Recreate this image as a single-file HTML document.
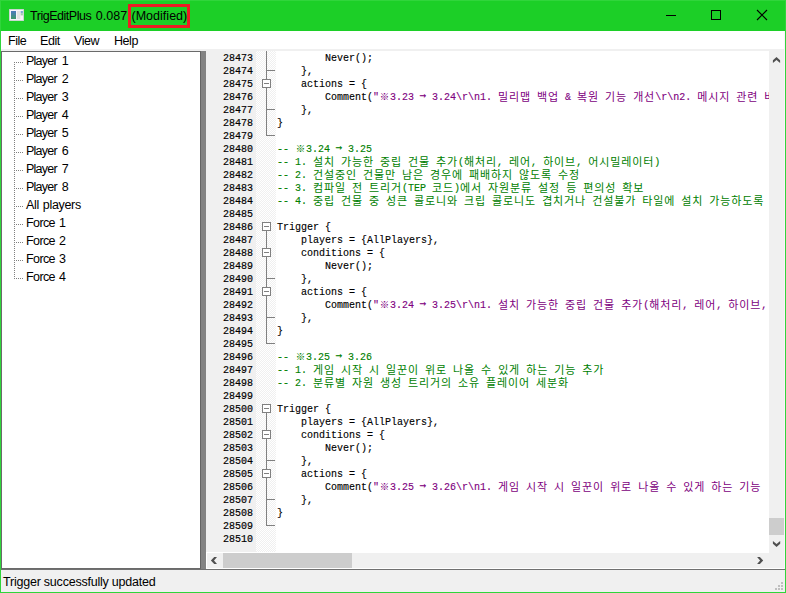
<!DOCTYPE html>
<html><head><meta charset="utf-8"><title>TrigEditPlus</title>
<style>
html,body{margin:0;padding:0;}
body{width:786px;height:593px;overflow:hidden;position:relative;background:#fff;font-family:"Liberation Sans","Noto Sans CJK KR",sans-serif;font-size:12px;color:#000;}
div,i,b,span{box-sizing:border-box;}
i,b{display:block;position:absolute;font-style:normal;font-weight:normal;}
#win{position:absolute;left:0;top:0;width:786px;height:593px;background:#30d53b;}
#title{position:absolute;left:0;top:0;width:786px;height:31px;background:#1ccf27;box-shadow:inset 1px 1px 0 #30d53b, inset -1px 0 0 #30d53b;}
#ttext{position:absolute;left:30px;top:7px;line-height:18px;font-size:12.5px;white-space:pre;letter-spacing:-0.25px;}
#ttext2{position:absolute;left:131.5px;top:7px;line-height:18px;font-size:12.5px;white-space:pre;letter-spacing:0.02px;}
#redbox{position:absolute;left:128px;top:4px;width:62px;height:24px;border:3px solid #ed1c24;}
#menu{position:absolute;left:1px;top:31px;width:784px;height:18px;background:#fff;}
#menu span{position:absolute;top:2px;line-height:16px;font-size:12.5px;letter-spacing:-0.45px;}
#menusep{position:absolute;left:1px;top:49px;width:784px;height:2px;background:#f0f0f0;}
#tree{position:absolute;left:1px;top:51px;width:200px;height:518px;background:#fff;border:1px solid #6a6a6a;border-right-color:#646464;}
#split{position:absolute;left:201px;top:51px;width:5px;height:518px;background:#838383;}
.ti{position:absolute;left:26px;height:18px;line-height:18px;font-size:12.5px;white-space:pre;}
.th{left:14px;width:9px;height:1px;background-image:linear-gradient(90deg,#808080 50%,transparent 0);background-size:2px 1px;}
.tv{left:14px;width:1px;background-image:linear-gradient(180deg,#808080 50%,transparent 0);background-size:1px 2px;}
#ed{position:absolute;left:206px;top:51px;width:579px;height:518px;background:#fff;overflow:hidden;}
#lnm{position:absolute;left:206px;top:49px;width:50px;height:503px;background:#f0f0f0;}
#fm{position:absolute;left:256px;top:51px;width:20px;height:501px;background-color:#fff;background-image:conic-gradient(#fff 25%,#f0f0f0 0 50%,#fff 0 75%,#f0f0f0 0);background-size:2px 2px;}
.ln,.cl{position:absolute;height:13px;line-height:13px;font-family:"Liberation Mono","Noto Sans CJK KR",monospace;font-size:10px;white-space:pre;}
.ln{left:206px;width:47px;text-align:right;padding-top:1px;-webkit-text-stroke:0.18px #000;}
.cl{left:277px;padding-top:1px;-webkit-text-stroke:0.13px currentColor;}
.k{-webkit-text-stroke:0;font-family:"Noto Sans CJK KR","NanumGothic",sans-serif;font-size:11px;letter-spacing:0.88px;display:inline-block;line-height:12px;vertical-align:top;position:relative;top:-1px;}
.a{font-family:"DejaVu Sans Mono",monospace;font-size:11px;display:inline-block;width:6px;text-indent:-0.3px;line-height:12px;vertical-align:top;position:relative;top:-1px;}
.r{font-family:"Noto Sans CJK KR",sans-serif;font-size:9.5px;display:inline-block;width:11px;text-align:center;line-height:12px;vertical-align:top;position:relative;top:-1.5px;}
.c{color:#008000;}
.s{color:#800080;}
.fv{left:266px;width:1px;background:#808080;}
.fh{left:266px;width:9px;height:1px;background:#808080;}
.fb{left:262px;width:9px;height:9px;border:1px solid #808080;background:#fff;}
.fb b{left:1px;top:3px;width:5px;height:1px;background:#808080;}
#clip{position:absolute;left:0;top:0;width:769px;height:553px;overflow:hidden;}
#rc{position:absolute;left:784px;top:31px;width:1px;height:561px;background:#fbf4fb;}
#vs{position:absolute;left:769px;top:49px;width:15px;height:504px;background:#f0f0f0;}
#vthumb{position:absolute;left:769px;top:518px;width:15px;height:17px;background:#cdcdcd;}
#hs{position:absolute;left:207px;top:553px;width:577px;height:15px;background:#f0f0f0;}
#hthumb{position:absolute;left:223px;top:553px;width:129px;height:15px;background:#cdcdcd;}
#sbline{position:absolute;left:1px;top:569px;width:784px;height:1px;background:#707070;}
#status{position:absolute;left:1px;top:570px;width:784px;height:22px;background:#f0f0f0;}
#status span{position:absolute;left:2px;top:3px;line-height:18px;font-size:12.5px;white-space:pre;letter-spacing:-0.22px;}
svg{position:absolute;overflow:visible;}
</style></head><body>
<div id="win"></div>
<div id="title">
 <svg style="left:9px;top:9px" width="15" height="12" viewBox="0 0 15 12">
  <rect x="0.25" y="0.25" width="14.5" height="11.5" fill="#f7f2fa" stroke="#d2c6dc" stroke-width="0.5"/>
  <rect x="2" y="2" width="5" height="2" fill="#4c7cb4"/><rect x="2" y="4" width="5" height="2" fill="#4884a2"/><rect x="2" y="6" width="5" height="2" fill="#448c8a"/><rect x="2" y="8" width="5" height="2" fill="#3f9472"/>
  <rect x="8" y="2" width="3.3" height="8" fill="#e2e2e2"/>
  <rect x="11.7" y="2" width="2.2" height="2.2" fill="#7ea9d2"/><rect x="11.7" y="4.2" width="2.2" height="2.2" fill="#a0ccae"/>
 </svg>
 <div id="ttext"><span style="letter-spacing:-0.47px">TrigEditPlus</span><span style="letter-spacing:0;position:absolute;left:62.4px"> 0.087</span></div><div id="ttext2">(Modified)</div>
 <div id="redbox"></div>
 <svg style="left:666px;top:10px" width="101" height="11" viewBox="0 0 101 11">
  <path d="M0 5.5H10" stroke="#000" stroke-width="1" fill="none"/>
  <rect x="45.5" y="0.5" width="9" height="9" stroke="#000" stroke-width="1" fill="none"/>
  <path d="M91 0L101 10M101 0L91 10" stroke="#000" stroke-width="1.1" fill="none"/>
 </svg>
</div>
<div id="menu"><span style="left:7px">File</span><span style="left:39px">Edit</span><span style="left:73px">View</span><span style="left:113px">Help</span></div>
<div id="menusep"></div>
<div id="tree"></div>
<div class="ti" style="top:52px;letter-spacing:-0.75px;word-spacing:2.1px">Player 1</div>
<i class="th" style="top:62px"></i>
<div class="ti" style="top:70px;letter-spacing:-0.75px;word-spacing:2.1px">Player 2</div>
<i class="th" style="top:80px"></i>
<div class="ti" style="top:88px;letter-spacing:-0.75px;word-spacing:2.1px">Player 3</div>
<i class="th" style="top:98px"></i>
<div class="ti" style="top:106px;letter-spacing:-0.75px;word-spacing:2.1px">Player 4</div>
<i class="th" style="top:116px"></i>
<div class="ti" style="top:124px;letter-spacing:-0.75px;word-spacing:2.1px">Player 5</div>
<i class="th" style="top:134px"></i>
<div class="ti" style="top:142px;letter-spacing:-0.75px;word-spacing:2.1px">Player 6</div>
<i class="th" style="top:152px"></i>
<div class="ti" style="top:160px;letter-spacing:-0.75px;word-spacing:2.1px">Player 7</div>
<i class="th" style="top:170px"></i>
<div class="ti" style="top:178px;letter-spacing:-0.75px;word-spacing:2.1px">Player 8</div>
<i class="th" style="top:188px"></i>
<div class="ti" style="top:196px;letter-spacing:-0.33px;word-spacing:0.8px">All players</div>
<i class="th" style="top:206px"></i>
<div class="ti" style="top:214px;letter-spacing:-0.60px;word-spacing:1.2px">Force 1</div>
<i class="th" style="top:224px"></i>
<div class="ti" style="top:232px;letter-spacing:-0.60px;word-spacing:1.2px">Force 2</div>
<i class="th" style="top:242px"></i>
<div class="ti" style="top:250px;letter-spacing:-0.60px;word-spacing:1.2px">Force 3</div>
<i class="th" style="top:260px"></i>
<div class="ti" style="top:268px;letter-spacing:-0.60px;word-spacing:1.2px">Force 4</div>
<i class="th" style="top:278px"></i>
<i class="tv" style="top:62px;height:217px"></i>
<div id="split"></div>
<div id="ed"></div>
<div id="lnm"></div>
<div id="fm"></div>
<div id="clip">
<i class="fv" style="top:51px;height:13px"></i>
<i class="fv" style="top:64px;height:13px"></i>
<i class="fh" style="top:70px"></i>
<i class="fv" style="top:77px;height:2px"></i>
<i class="fv" style="top:88px;height:2px"></i>
<i class="fb" style="top:79px"><b></b></i>
<i class="fv" style="top:90px;height:13px"></i>
<i class="fv" style="top:103px;height:13px"></i>
<i class="fh" style="top:109px"></i>
<i class="fv" style="top:116px;height:13px"></i>
<i class="fv" style="top:129px;height:7px"></i>
<i class="fh" style="top:135px"></i>
<i class="fv" style="top:231px;height:2px"></i>
<i class="fb" style="top:222px"><b></b></i>
<i class="fv" style="top:233px;height:13px"></i>
<i class="fv" style="top:246px;height:2px"></i>
<i class="fv" style="top:257px;height:2px"></i>
<i class="fb" style="top:248px"><b></b></i>
<i class="fv" style="top:259px;height:13px"></i>
<i class="fv" style="top:272px;height:13px"></i>
<i class="fh" style="top:278px"></i>
<i class="fv" style="top:285px;height:2px"></i>
<i class="fv" style="top:296px;height:2px"></i>
<i class="fb" style="top:287px"><b></b></i>
<i class="fv" style="top:298px;height:13px"></i>
<i class="fv" style="top:311px;height:13px"></i>
<i class="fh" style="top:317px"></i>
<i class="fv" style="top:324px;height:13px"></i>
<i class="fv" style="top:337px;height:7px"></i>
<i class="fh" style="top:343px"></i>
<i class="fv" style="top:413px;height:2px"></i>
<i class="fb" style="top:404px"><b></b></i>
<i class="fv" style="top:415px;height:13px"></i>
<i class="fv" style="top:428px;height:2px"></i>
<i class="fv" style="top:439px;height:2px"></i>
<i class="fb" style="top:430px"><b></b></i>
<i class="fv" style="top:441px;height:13px"></i>
<i class="fv" style="top:454px;height:13px"></i>
<i class="fh" style="top:460px"></i>
<i class="fv" style="top:467px;height:2px"></i>
<i class="fv" style="top:478px;height:2px"></i>
<i class="fb" style="top:469px"><b></b></i>
<i class="fv" style="top:480px;height:13px"></i>
<i class="fv" style="top:493px;height:13px"></i>
<i class="fh" style="top:499px"></i>
<i class="fv" style="top:506px;height:13px"></i>
<i class="fv" style="top:519px;height:7px"></i>
<i class="fh" style="top:525px"></i>
<div class="ln" style="top:51px">28473</div>
<div class="cl" style="top:51px">        Never();</div>
<div class="ln" style="top:64px">28474</div>
<div class="cl" style="top:64px">    },</div>
<div class="ln" style="top:77px">28475</div>
<div class="cl" style="top:77px">    actions = {</div>
<div class="ln" style="top:90px">28476</div>
<div class="cl" style="top:90px">        Comment(<span class="s">"<span class="r">※</span>3.23 <span class="a">→</span> 3.24\r\n1. <span class="k">밀리맵</span> <span class="k">백업</span> &amp; <span class="k">복원</span> <span class="k">기능</span> <span class="k">개선</span>\r\n2. <span class="k">메시지</span> <span class="k">관련</span> <span class="k">버그</span> <span class="k">수정</span></span></div>
<div class="ln" style="top:103px">28477</div>
<div class="cl" style="top:103px">    },</div>
<div class="ln" style="top:116px">28478</div>
<div class="cl" style="top:116px">}</div>
<div class="ln" style="top:129px">28479</div>
<div class="ln" style="top:142px">28480</div>
<div class="cl" style="top:142px"><span class="c">-- <span class="r">※</span>3.24 <span class="a">→</span> 3.25</span></div>
<div class="ln" style="top:155px">28481</div>
<div class="cl" style="top:155px"><span class="c">-- 1. <span class="k">설치</span> <span class="k">가능한</span> <span class="k">중립</span> <span class="k">건물</span> <span class="k">추가</span>(<span class="k">해처리</span>, <span class="k">레어</span>, <span class="k">하이브</span>, <span class="k">어시밀레이터</span>)</span></div>
<div class="ln" style="top:168px">28482</div>
<div class="cl" style="top:168px"><span class="c">-- 2. <span class="k">건설중인</span> <span class="k">건물만</span> <span class="k">남은</span> <span class="k">경우에</span> <span class="k">패배하지</span> <span class="k">않도록</span> <span class="k">수정</span></span></div>
<div class="ln" style="top:181px">28483</div>
<div class="cl" style="top:181px"><span class="c">-- 3. <span class="k">컴파일</span> <span class="k">전</span> <span class="k">트리거</span>(TEP <span class="k">코드</span>)<span class="k">에서</span> <span class="k">자원분류</span> <span class="k">설정</span> <span class="k">등</span> <span class="k">편의성</span> <span class="k">확보</span></span></div>
<div class="ln" style="top:194px">28484</div>
<div class="cl" style="top:194px"><span class="c">-- 4. <span class="k">중립</span> <span class="k">건물</span> <span class="k">중</span> <span class="k">성큰</span> <span class="k">콜로니와</span> <span class="k">크립</span> <span class="k">콜로니도</span> <span class="k">겹치거나</span> <span class="k">건설불가</span> <span class="k">타일에</span> <span class="k">설치</span> <span class="k">가능하도록</span></span></div>
<div class="ln" style="top:207px">28485</div>
<div class="ln" style="top:220px">28486</div>
<div class="cl" style="top:220px">Trigger {</div>
<div class="ln" style="top:233px">28487</div>
<div class="cl" style="top:233px">    players = {AllPlayers},</div>
<div class="ln" style="top:246px">28488</div>
<div class="cl" style="top:246px">    conditions = {</div>
<div class="ln" style="top:259px">28489</div>
<div class="cl" style="top:259px">        Never();</div>
<div class="ln" style="top:272px">28490</div>
<div class="cl" style="top:272px">    },</div>
<div class="ln" style="top:285px">28491</div>
<div class="cl" style="top:285px">    actions = {</div>
<div class="ln" style="top:298px">28492</div>
<div class="cl" style="top:298px">        Comment(<span class="s">"<span class="r">※</span>3.24 <span class="a">→</span> 3.25\r\n1. <span class="k">설치</span> <span class="k">가능한</span> <span class="k">중립</span> <span class="k">건물</span> <span class="k">추가</span>(<span class="k">해처리</span>, <span class="k">레어</span>, <span class="k">하이브</span>, <span class="k">어시밀레이터</span>)</span></div>
<div class="ln" style="top:311px">28493</div>
<div class="cl" style="top:311px">    },</div>
<div class="ln" style="top:324px">28494</div>
<div class="cl" style="top:324px">}</div>
<div class="ln" style="top:337px">28495</div>
<div class="ln" style="top:350px">28496</div>
<div class="cl" style="top:350px"><span class="c">-- <span class="r">※</span>3.25 <span class="a">→</span> 3.26</span></div>
<div class="ln" style="top:363px">28497</div>
<div class="cl" style="top:363px"><span class="c">-- 1. <span class="k">게임</span> <span class="k">시작</span> <span class="k">시</span> <span class="k">일꾼이</span> <span class="k">위로</span> <span class="k">나올</span> <span class="k">수</span> <span class="k">있게</span> <span class="k">하는</span> <span class="k">기능</span> <span class="k">추가</span></span></div>
<div class="ln" style="top:376px">28498</div>
<div class="cl" style="top:376px"><span class="c">-- 2. <span class="k">분류별</span> <span class="k">자원</span> <span class="k">생성</span> <span class="k">트리거의</span> <span class="k">소유</span> <span class="k">플레이어</span> <span class="k">세분화</span></span></div>
<div class="ln" style="top:389px">28499</div>
<div class="ln" style="top:402px">28500</div>
<div class="cl" style="top:402px">Trigger {</div>
<div class="ln" style="top:415px">28501</div>
<div class="cl" style="top:415px">    players = {AllPlayers},</div>
<div class="ln" style="top:428px">28502</div>
<div class="cl" style="top:428px">    conditions = {</div>
<div class="ln" style="top:441px">28503</div>
<div class="cl" style="top:441px">        Never();</div>
<div class="ln" style="top:454px">28504</div>
<div class="cl" style="top:454px">    },</div>
<div class="ln" style="top:467px">28505</div>
<div class="cl" style="top:467px">    actions = {</div>
<div class="ln" style="top:480px">28506</div>
<div class="cl" style="top:480px">        Comment(<span class="s">"<span class="r">※</span>3.25 <span class="a">→</span> 3.26\r\n1. <span class="k">게임</span> <span class="k">시작</span> <span class="k">시</span> <span class="k">일꾼이</span> <span class="k">위로</span> <span class="k">나올</span> <span class="k">수</span> <span class="k">있게</span> <span class="k">하는</span> <span class="k">기능</span> </span></div>
<div class="ln" style="top:493px">28507</div>
<div class="cl" style="top:493px">    },</div>
<div class="ln" style="top:506px">28508</div>
<div class="cl" style="top:506px">}</div>
<div class="ln" style="top:519px">28509</div>
<div class="ln" style="top:532px">28510</div>
</div>
<div id="vs"></div>
<div id="rc"></div>
<div id="vthumb"></div>
<svg style="left:772px;top:56px" width="10" height="8" viewBox="0 0 10 8"><polygon points="4.5,0.9 8.1,4.2 8.1,7.0 4.5,4.0 0.9,7.0 0.9,4.2" fill="#505050"/></svg>
<svg style="left:772px;top:540px" width="10" height="8" viewBox="0 0 10 8"><polygon points="0.9,1.0 0.9,3.8 4.55,7.1 8.2,3.8 8.2,1.0 4.55,4.1" fill="#505050"/></svg>
<div id="hs"></div>
<div id="hthumb"></div>
<svg style="left:210px;top:556px" width="8" height="9" viewBox="0 0 8 9"><polygon points="0.9,4.5 4.2,0.9 7.0,0.9 4.0,4.5 7.0,8.1 4.2,8.1" fill="#505050"/></svg>
<svg style="left:756px;top:556px" width="8" height="9" viewBox="0 0 8 9"><polygon points="7.2,4.5 3.9,0.9 1.1,0.9 4.1,4.5 1.1,8.1 3.9,8.1" fill="#505050"/></svg>
<div id="sbline"></div>
<div id="status"><span>Trigger successfully updated</span>
 <svg style="left:774px;top:12px" width="9" height="9" viewBox="0 0 9 9" fill="#bfbfbf"><rect x="6" y="0" width="2" height="2"/><rect x="3" y="3" width="2" height="2"/><rect x="6" y="3" width="2" height="2"/><rect x="0" y="6" width="2" height="2"/><rect x="3" y="6" width="2" height="2"/><rect x="6" y="6" width="2" height="2"/></svg>
</div>
</body></html>
